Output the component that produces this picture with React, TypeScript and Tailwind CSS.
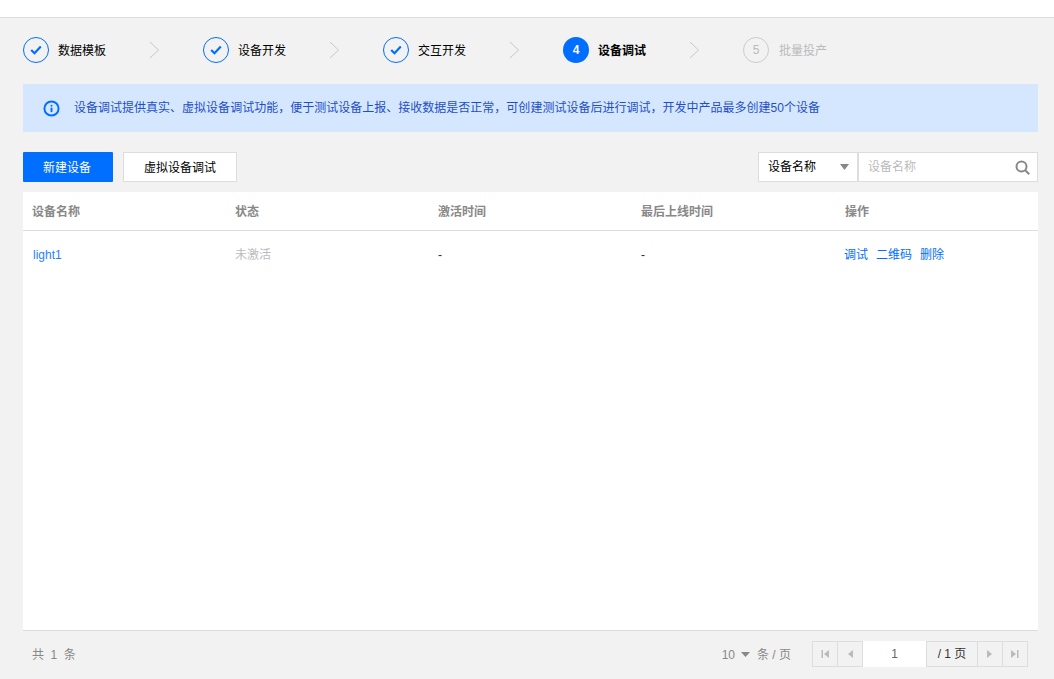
import { Info } from 'lucide-react';

const font = "font-['Liberation_Sans','Noto_Sans_CJK_SC',sans-serif]";

const steps = [
  { label: '数据模板', state: 'done' },
  { label: '设备开发', state: 'done' },
  { label: '交互开发', state: 'done' },
  { label: '设备调试', state: 'current', num: 4 },
  { label: '批量投产', state: 'todo', num: 5 },
];

const columns = ['设备名称', '状态', '激活时间', '最后上线时间', '操作'];

function Step({ label, state, num, last }: { label: string; state: string; num?: number; last: boolean }) {
  return (
    <div className="flex w-[180px] items-center">
      {state === 'done' && (
        <span className="flex h-[26px] w-[26px] items-center justify-center rounded-full border border-[#006eff]">
          <svg width="12" height="10" viewBox="0 0 12 10" fill="none">
            <path d="M1.2 5l3.3 3.2L10.8 1.6" stroke="#006eff" strokeWidth="2.2" />
          </svg>
        </span>
      )}
      {state === 'current' && (
        <span className="flex h-[26px] w-[26px] items-center justify-center rounded-full bg-[#006eff] text-xs font-bold text-white">
          {num}
        </span>
      )}
      {state === 'todo' && (
        <span className="flex h-[26px] w-[26px] items-center justify-center rounded-full border border-[#ccc] text-xs text-[#bbb]">
          {num}
        </span>
      )}
      <span
        className={`whitespace-nowrap pt-px text-xs ${
          state === 'todo' ? 'ml-[10px] w-[48px] text-[#bbb]' : 'ml-[9px] w-[49px] text-black'
        } ${state === 'current' ? 'font-bold' : ''}`}
      >
        {label}
      </span>
      {!last && (
        <svg className="ml-[42px]" width="11" height="18" viewBox="0 0 11 18" fill="none">
          <path d="M1 1l8.5 8L1 17" stroke="#c8c8c8" strokeWidth="1" />
        </svg>
      )}
    </div>
  );
}

function PageButton({ d }: { d: string }) {
  return (
    <button className="flex h-[26px] w-[25px] items-center justify-center border-r border-[#ddd]">
      <svg width="10" height="10" viewBox="0 0 10 10" fill="#bbb">
        <path d={d} />
      </svg>
    </button>
  );
}

export default function App() {
  return (
    <div className={`flex h-[679px] flex-col overflow-hidden bg-[#f2f2f2] ${font}`}>
      <div className="h-[18px] shrink-0 border-b border-[#dddddd] bg-white" />

      <div className="flex h-[66px] shrink-0 items-center pb-[2px] pl-[23px]">
        {steps.map((s, i) => (
          <Step key={s.label} label={s.label} state={s.state} num={s.num} last={i === steps.length - 1} />
        ))}
      </div>

      <div className="flex flex-1 flex-col pl-[23px] pr-[16px]">
        <div className="flex h-[48px] items-center bg-[#d5e7ff] pl-[20px] text-xs text-[#1f4fc4]">
          <Info size={17} strokeWidth={2.75} className="text-[#006eff]" />
          <span className="ml-[14px] tracking-[0.01px]">
            设备调试提供真实、虚拟设备调试功能，便于测试设备上报、接收数据是否正常，可创建测试设备后进行调试，开发中产品最多创建50个设备
          </span>
        </div>

        <div className="mt-[20px] flex h-[30px] items-center justify-between">
          <div className="flex gap-[10px]">
            <button className="h-[30px] w-[90px] rounded-[1px] bg-[#006eff] pr-[2px] pt-px text-xs text-white">
              新建设备
            </button>
            <button className="h-[30px] w-[114px] border border-[#dddddd] bg-white pt-px text-xs text-black">
              虚拟设备调试
            </button>
          </div>
          <div className="flex">
            <div className="flex h-[30px] w-[100px] items-center justify-between border border-[#dddddd] bg-white pl-[9px] pr-[7px] text-xs text-black">
              设备名称
              <svg width="10" height="6" viewBox="0 0 10 6" fill="#888">
                <path d="M0 0h9L4.5 6z" />
              </svg>
            </div>
            <div className="flex h-[30px] w-[180px] items-center justify-between border border-[#dddddd] bg-white pl-[9px] pr-[7px] text-xs text-[#bbb]">
              设备名称
              <svg width="15" height="15" viewBox="0 0 15 15" fill="none" stroke="#888" strokeWidth="2">
                <circle cx="6.5" cy="6.5" r="5" />
                <path d="M10.2 10.2l4 4" />
              </svg>
            </div>
          </div>
        </div>

        <div className="mt-[10px] h-[439px] border-b border-[#dddddd] bg-white text-xs">
          <div className="grid h-[39px] grid-cols-5 items-center border-b border-[#dddddd] pt-px font-bold text-[#888]">
            {columns.map((c, i) => (
              <div key={c} className={i === 4 ? 'pl-[10px]' : 'pl-[9px]'}>
                {c}
              </div>
            ))}
          </div>
          <div className="grid h-[48px] grid-cols-5 items-center">
            <div className="pl-[10px] text-[#2a7fff]">light1</div>
            <div className="pl-[9px] text-[#bbb]">未激活</div>
            <div className="pb-px pl-[9px] text-[#1a2a4a]">-</div>
            <div className="pb-px pl-[9px] text-[#1a2a4a]">-</div>
            <div className="flex gap-[8px] pl-[9px] text-[#006eff]">
              <span>调试</span>
              <span>二维码</span>
              <span>删除</span>
            </div>
          </div>
        </div>

        <div className="flex flex-1 items-center justify-between pb-[2px] pl-[9px] pr-[10px] text-xs text-[#888]">
          <span className="pt-[2px] tracking-[1.6px]">共 1 条</span>
          <div className="flex items-center">
            <span className="pt-px">10</span>
            <svg className="ml-[6px]" width="9" height="5" viewBox="0 0 9 5" fill="#888">
              <path d="M0 0h9L4.5 5z" />
            </svg>
            <span className="ml-[7px] mr-[21px] pt-px">条 / 页</span>
            <div className="flex h-[26px] items-center border border-r-0 border-[#dddddd]">
              <PageButton d="M1.5 1h1.5v8H1.5zM9 1v8L4 5z" />
              <PageButton d="M8 1v8L3 5z" />
              <div className="flex h-[26px] w-[64px] items-center justify-center border-r border-[#ddd] bg-white text-[#666]">
                1
              </div>
              <div className="flex h-[26px] w-[51px] items-center justify-center border-r border-[#ddd] text-[#333]">
                / 1 页
              </div>
              <PageButton d="M2 1v8l5-4z" />
              <PageButton d="M1 1v8l5-4zM7 1h1.5v8H7z" />
            </div>
          </div>
        </div>
      </div>
    </div>
  );
}
